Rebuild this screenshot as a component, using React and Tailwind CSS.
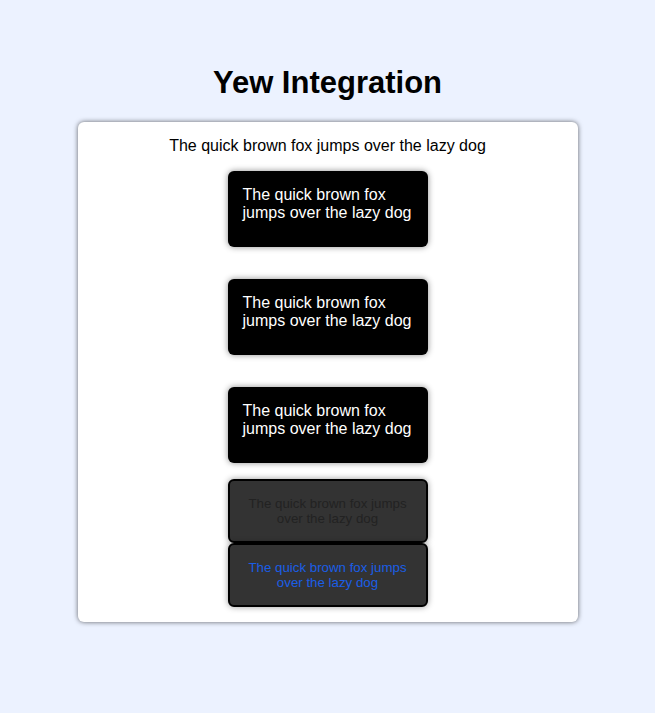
const SENTENCE = 'The quick brown fox jumps over the lazy dog';

const DarkBox = () => (
  <div className="w-[200px] h-[76px] bg-black rounded-[6px] shadow-[0_0_6px_rgba(0,0,0,0.45)] pl-[15px] pr-[12px] pt-[15px] text-white text-[16px] leading-[18px]">
    {SENTENCE}
  </div>
);

const GreyBox = ({ color }) => (
  <div
    className={`w-[200px] h-[64px] bg-[#333333] border-2 border-black rounded-[6px] shadow-[0_0_6px_rgba(0,0,0,0.4)] flex items-center justify-center text-center px-[14px] text-[13.3px] leading-[15px] ${color}`}
  >
    {SENTENCE}
  </div>
);

export default function App() {
  return (
    <div className="min-h-[713px] bg-[#ecf2ff] flex flex-col items-center pt-[65px] font-['Liberation_Sans',Arial,sans-serif]">
      <h1 className="text-[31px] leading-[36px] font-bold text-black mb-[21px]">Yew Integration</h1>
      <div className="w-[500px] h-[500px] bg-white rounded-[6px] shadow-[0_0_5px_rgba(0,0,0,0.6)] flex flex-col items-center pt-[15px]">
        <p className="text-[16px] leading-[18px] text-black mb-[16px]">{SENTENCE}</p>
        <div className="flex flex-col items-center gap-[32px]">
          <DarkBox />
          <DarkBox />
          <DarkBox />
        </div>
        <div className="flex flex-col items-center mt-[16px]">
          <GreyBox color="text-[#222222]" />
          <GreyBox color="text-[#1a5ee6]" />
        </div>
      </div>
    </div>
  );
}
